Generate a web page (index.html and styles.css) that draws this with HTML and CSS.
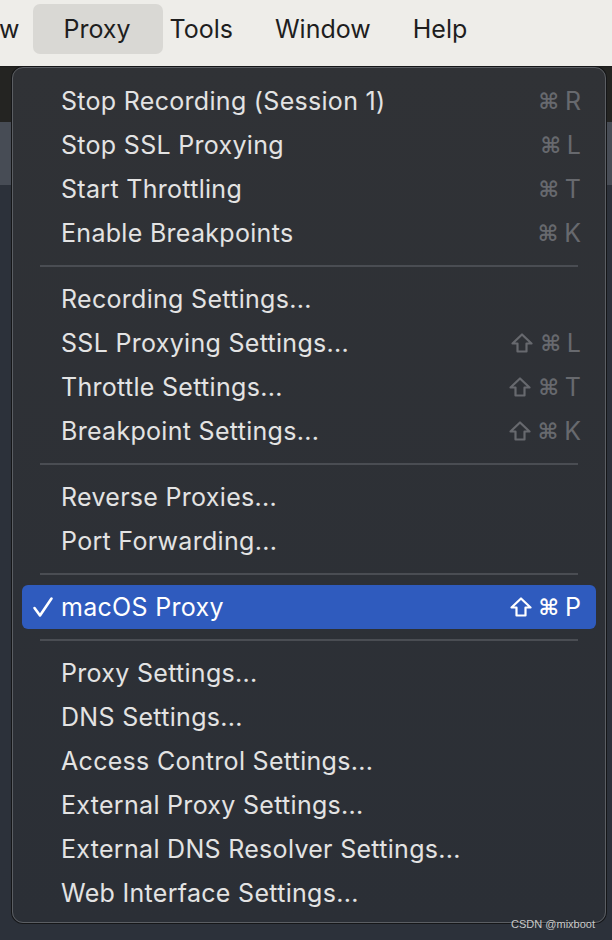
FILE: index.html
```html
<!DOCTYPE html>
<html lang="en">
<head>
    <meta charset="UTF-8">
    <meta name="viewport" content="width=device-width, initial-scale=1.0">
    <title>Proxy Menu</title>
    <link rel="stylesheet" href="styles.css">
</head>
<body>
    <!-- top menu bar -->
    <header class="menubar">
        <span class="bar-item bar-cut">w</span>
        <span class="bar-item bar-active">Proxy</span>
        <span class="bar-item">Tools</span>
        <span class="bar-item">Window</span>
        <span class="bar-item">Help</span>
    </header>

    <main class="desktop">
        <!-- dropdown for the Proxy menu -->
        <section class="dropdown">
            <div class="row"><span class="label">Stop Recording (Session 1)</span><span class="keys"><span class="sym">&#8984;</span>R</span></div>
            <div class="row"><span class="label">Stop SSL Proxying</span><span class="keys"><span class="sym">&#8984;</span>L</span></div>
            <div class="row"><span class="label">Start Throttling</span><span class="keys"><span class="sym">&#8984;</span>T</span></div>
            <div class="row"><span class="label">Enable Breakpoints</span><span class="keys"><span class="sym">&#8984;</span>K</span></div>
            <hr class="sep">
            <div class="row"><span class="label">Recording Settings...</span></div>
            <div class="row"><span class="label">SSL Proxying Settings...</span><span class="keys"><svg class="shift" viewBox="0 0 22 20"><path d="M11 1.5 L20.5 10.5 H15.5 V18.5 H6.5 V10.5 H1.5 Z"/></svg><span class="sym">&#8984;</span>L</span></div>
            <div class="row"><span class="label">Throttle Settings...</span><span class="keys"><svg class="shift" viewBox="0 0 22 20"><path d="M11 1.5 L20.5 10.5 H15.5 V18.5 H6.5 V10.5 H1.5 Z"/></svg><span class="sym">&#8984;</span>T</span></div>
            <div class="row"><span class="label">Breakpoint Settings...</span><span class="keys"><svg class="shift" viewBox="0 0 22 20"><path d="M11 1.5 L20.5 10.5 H15.5 V18.5 H6.5 V10.5 H1.5 Z"/></svg><span class="sym">&#8984;</span>K</span></div>
            <hr class="sep">
            <div class="row"><span class="label">Reverse Proxies...</span></div>
            <div class="row"><span class="label">Port Forwarding...</span></div>
            <hr class="sep">
            <div class="row row-on">
                <svg class="check" viewBox="0 0 22 22"><path d="M2.5 12 L8 19.5 L19.5 2.5"/></svg>
                <span class="label">macOS Proxy</span>
                <span class="keys"><svg class="shift" viewBox="0 0 22 20"><path d="M11 1.5 L20.5 10.5 H15.5 V18.5 H6.5 V10.5 H1.5 Z"/></svg><span class="sym">&#8984;</span>P</span>
            </div>
            <hr class="sep">
            <div class="row"><span class="label">Proxy Settings...</span></div>
            <div class="row"><span class="label">DNS Settings...</span></div>
            <div class="row"><span class="label">Access Control Settings...</span></div>
            <div class="row"><span class="label">External Proxy Settings...</span></div>
            <div class="row"><span class="label">External DNS Resolver Settings...</span></div>
            <div class="row"><span class="label">Web Interface Settings...</span></div>
        </section>
        <span class="watermark">CSDN @mixboot</span>
    </main>
</body>
</html>
```

FILE: styles.css
```css
* {
    box-sizing: border-box;
}

body {
    margin: 0;
    width: 612px;
    height: 940px;
    overflow: hidden;
    font-family: Inter, "Noto Sans", sans-serif;
    background-color: #2b3038;
}

.menubar {
    height: 67px;
    display: flex;
    align-items: center;
    padding-bottom: 9px;
    background-color: #eeede9;
    border-bottom: 1px solid #1c1c1b;
}

.bar-item {
    height: 50px;
    line-height: 50px;
    padding: 0 21px;
    font-size: 25px;
    color: #1e1e1e;
    border-radius: 7px;
}

.bar-cut {
    padding: 0;
    margin-left: -1px;
    margin-right: 14px;
}

.bar-active {
    padding: 0 32px 0 30px;
    margin-right: -14px;
    background-color: #d9d8d4;
}

.desktop {
    position: relative;
    height: 873px;
    padding: 0 6px 0 12px;
    background: linear-gradient(#242422 0, #242422 55px, #474c55 55px, #474c55 118px, #2c313a 118px);
}

.dropdown {
    display: flex;
    flex-direction: column;
    width: 594px;
    padding: 11px 9px 7px;
    background: linear-gradient(#303236, #2b2f36);
    border: 1px solid #5b5e63;
    border-radius: 11px;
    box-shadow: 0 0 0 1px #151618;
}

.row {
    display: flex;
    align-items: center;
    height: 44px;
    padding: 0 15px 0 39px;
    font-size: 25px;
    letter-spacing: 0.3px;
    color: #e3e3e3;
    border-radius: 6px;
}

.label {
    flex: 1;
}

.keys {
    color: #67696e;
    display: flex;
    align-items: center;
    gap: 6px;
    letter-spacing: 0;
}

.sym {
    font-family: "DejaVu Sans", sans-serif;
    font-size: 22px;
    font-weight: bold;
}

.shift {
    width: 22px;
    height: 20px;
    fill: none;
    stroke: currentColor;
    stroke-width: 2.2;
    stroke-linejoin: round;
    margin-right: 1px;
}

.row-on {
    padding-left: 10px;
    background-color: #2f5bbe;
    color: #ffffff;
}

.row-on .keys {
    color: #ffffff;
}

.check {
    width: 22px;
    height: 22px;
    margin-right: 7px;
    fill: none;
    stroke: #ffffff;
    stroke-width: 2.6;
    stroke-linecap: round;
    stroke-linejoin: round;
}

.sep {
    margin: 10px 18px;
    border: 0;
    height: 2px;
    background-color: #4a4d53;
}

.watermark {
    position: absolute;
    right: 17px;
    top: 851px;
    font-family: "Liberation Sans", sans-serif;
    font-size: 11px;
    color: #c8c8c8;
}
```
